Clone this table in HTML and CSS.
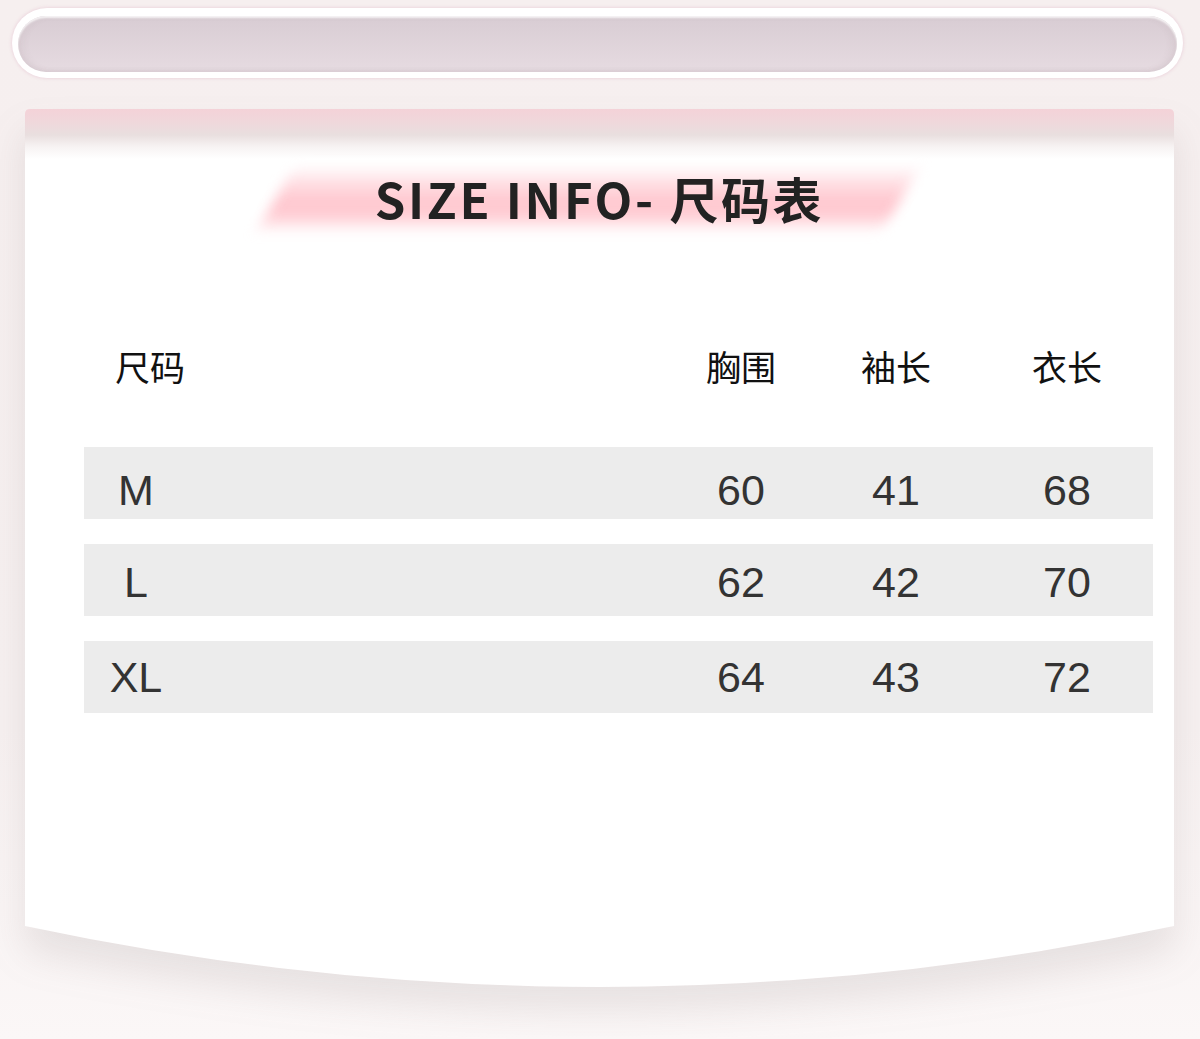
FILE: index.html
```html
<!DOCTYPE html>
<html lang="zh-CN">
<head>
<meta charset="utf-8">
<title>SIZE INFO - 尺码表</title>
<link rel="stylesheet" href="styles.css">
</head>
<body>
<div class="page">
  <div class="search"><div class="search-inner"></div></div>
  <div class="card-wrap">
    <div class="card">
      <div class="title-wrap">
        <div class="brush"></div>
        <h1 class="title">SIZE INFO- 尺码表</h1>
      </div>
      <div class="table">
        <div class="head">
          <span class="head-size">尺码</span>
          <span></span>
          <span>胸围</span>
          <span>袖长</span>
          <span>衣长</span>
        </div>
        <div class="rows">
          <div class="row row-m">
            <span>M</span><span></span><span>60</span><span>41</span><span>68</span>
          </div>
          <div class="row row-l">
            <span>L</span><span></span><span>62</span><span>42</span><span>70</span>
          </div>
          <div class="row row-xl">
            <span>XL</span><span></span><span>64</span><span>43</span><span>72</span>
          </div>
        </div>
      </div>
    </div>
  </div>
</div>
</body>
</html>
```
FILE: styles.css
```css
html, body {
  margin: 0;
  padding: 0;
}
body {
  width: 1200px;
  height: 1039px;
  overflow: hidden;
  background: linear-gradient(#f6efef, #f6f0f0 70%, #fbf7f7);
  font-family: "Noto Sans CJK SC", "Noto Sans", sans-serif;
}
.page {
  padding-top: 8px;
}
.search {
  margin-left: 12px;
  width: 1171px;
  height: 70px;
  box-sizing: border-box;
  border-radius: 35px;
  background: #fff;
  padding: 8px 6px 6px 6px;
  box-shadow: 0 0 3px 1px rgba(236, 214, 222, 0.9);
}
.search-inner {
  height: 100%;
  border-radius: 30px;
  background: linear-gradient(#d8ccd3, #e6dbe1);
  box-shadow: inset 0 2px 2px rgba(255, 255, 255, 0.8), inset 0 -2px 4px rgba(120, 90, 100, 0.06), inset 6px 0 6px rgba(120, 90, 100, 0.05), inset -6px 0 6px rgba(120, 90, 100, 0.05);
}
.card-wrap {
  margin: 31px 0 0 25px;
  width: 1149px;
  filter: drop-shadow(0 24px 18px rgba(110, 90, 90, 0.13));
}
.card {
  height: 878px;
  box-sizing: border-box;
  padding-top: 58px;
  background: linear-gradient(#f4d2d8 0, #f0d7db 12px, #e9dfdf 26px, #f7f3f3 38px, #fff 50px);
  clip-path: path('M0 5 Q0 0 5 0 H1144 Q1149 0 1149 5 V817 Q574.5 939 0 817 Z');
}
.title-wrap {
  position: relative;
  height: 62px;
}
.brush {
  position: absolute;
  left: 250px;
  top: 3px;
  width: 626px;
  height: 58px;
  transform: skewX(-28deg);
  background: linear-gradient(rgba(255, 216, 222, 0.3), #ffccd3 45%, #ffc5cd 70%, rgba(255, 212, 218, 0.45));
  filter: blur(7px);
}
.title {
  position: relative;
  margin: 0;
  text-align: center;
  font-size: 49px;
  line-height: 62px;
  font-weight: 700;
  letter-spacing: 2.6px;
  color: #222;
}
.table {
  margin: 119px 0 0 59px;
  width: 1069px;
}
.head, .row {
  display: grid;
  grid-template-columns: 104px 483px 140px 170px 172px;
  text-align: center;
}
.head {
  height: 36px;
  font-size: 35px;
  line-height: 36px;
  color: #111;
}
.head-size {
  text-align: left;
  padding-left: 31px;
  white-space: nowrap;
}
.rows {
  margin-top: 63px;
  display: flex;
  flex-direction: column;
  gap: 25px;
}
.row {
  height: 72px;
  box-sizing: border-box;
  padding-top: 16px;
  background: #ececec;
  font-family: "Liberation Sans", Arial, sans-serif;
  font-size: 43px;
  line-height: 43px;
  color: #333;
}
.row-m {
  padding-top: 22px;
}
.row-l {
  padding-top: 17px;
}
.row-xl {
  padding-top: 15px;
}
```
